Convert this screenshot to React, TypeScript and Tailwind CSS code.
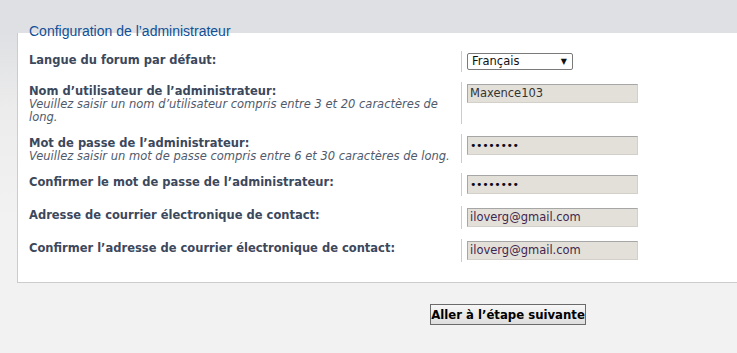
import React from "react";

const font = { fontFamily: '"DejaVu Sans", Verdana, sans-serif' };

function Row({
  label,
  hint,
  children,
}: {
  label: string;
  hint?: string[];
  children: React.ReactNode;
}) {
  return (
    <div className="flex mb-[10px]">
      <div className="w-[432px] shrink-0 pt-[3px] text-[11.5px] leading-[13px]">
        <div className="font-bold text-[#3c485c]">{label}</div>
        {hint && (
          <div className="italic text-[#4f5a6c] pr-[4px] whitespace-nowrap">
            {hint.map((h, i) => (
              <div key={i}>{h}</div>
            ))}
          </div>
        )}
      </div>
      <div className="border-l border-[#cccccc] pl-[5px] py-[2px]">{children}</div>
    </div>
  );
}

function Field({ value, email }: { value: string; email?: boolean }) {
  return (
    <div
      className={`w-[171px] h-[19px] bg-[#e3e0d9] border-t border-l border-[#a6a6a6] border-b border-r border-b-[#d3d0c9] border-r-[#d3d0c9] pl-[2px] text-[11.5px] leading-[17px] ${
        email ? "text-[#41264f]" : "text-[#333333]"
      }`}
    >
      {value}
    </div>
  );
}

function Dots() {
  return (
    <div className="w-[171px] h-[19px] bg-[#e3e0d9] border-t border-l border-[#a6a6a6] border-b border-r border-b-[#d3d0c9] border-r-[#d3d0c9] pl-[2px] text-[11px] leading-[17px] tracking-[-0.4px] text-[#0a0a1a]">
      ••••••••
    </div>
  );
}

export default function App() {
  return (
    <div
      className="min-h-[353px] w-[737px] overflow-hidden bg-[linear-gradient(to_bottom,#dee0e3_0px,#dee0e3_33px,#ececec_110px,#f2f2f2_220px)] pt-[23px]"
      style={font}
    >
      <div
        className="relative z-10 ml-[29px] h-[16px] -mb-[6px] text-[14px] leading-[16px] text-[#115098]"
        style={{ fontFamily: '"Liberation Sans", Arial, sans-serif' }}
      >
        Configuration de l’administrateur
      </div>
      <div className="ml-[17px] bg-white border-l border-b border-[#cccccc] pt-[18px] pl-[11px] pb-[10px]">
        <Row label="Langue du forum par défaut:">
          <div className="w-[106px] h-[17px] bg-white border border-[#7a7a7a] rounded-[2px] flex items-center justify-between pl-[4px] pr-[5px] text-[11.5px] text-[#111111]">
            <span className="leading-[15px]">Français</span>
            <span className="text-[8px] leading-[15px]">▼</span>
          </div>
        </Row>
        <Row
          label="Nom d’utilisateur de l’administrateur:"
          hint={[
            "Veuillez saisir un nom d’utilisateur compris entre 3 et 20 caractères de",
            "long.",
          ]}
        >
          <Field value="Maxence103" />
        </Row>
        <Row
          label="Mot de passe de l’administrateur:"
          hint={["Veuillez saisir un mot de passe compris entre 6 et 30 caractères de long."]}
        >
          <Dots />
        </Row>
        <Row label="Confirmer le mot de passe de l’administrateur:">
          <Dots />
        </Row>
        <Row label="Adresse de courrier électronique de contact:">
          <Field value="iloverg@gmail.com" email />
        </Row>
        <Row label="Confirmer l’adresse de courrier électronique de contact:">
          <Field value="iloverg@gmail.com" email />
        </Row>
      </div>
      <div className="pt-[19px] pl-[430px]">
        <button
          className="h-[21px] w-[156px] border border-[#6b6b6b] bg-[linear-gradient(to_bottom,#f7f7f7,#dedede)] text-[13px] font-bold text-black leading-[19px] whitespace-nowrap px-0"
          style={{ fontFamily: '"DejaVu Sans Condensed", "DejaVu Sans", sans-serif' }}
        >
          Aller à l’étape suivante
        </button>
      </div>
    </div>
  );
}
